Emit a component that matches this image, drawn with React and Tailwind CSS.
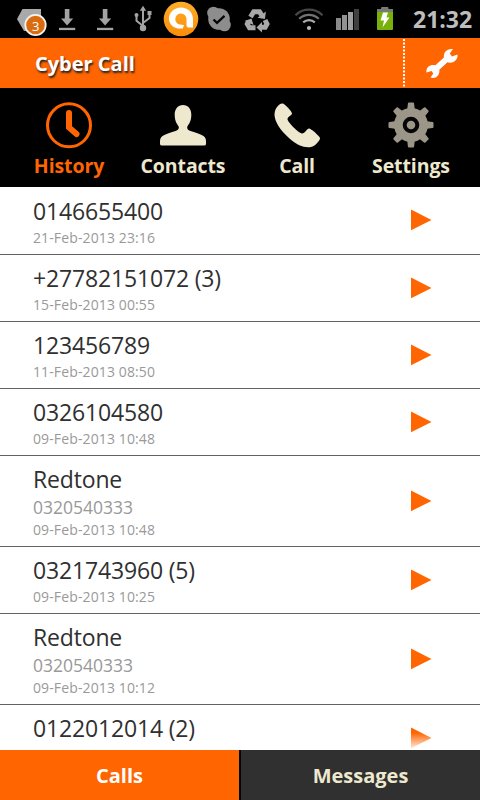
import React from "react";

const calls = [
  { title: "0146655400", date: "21-Feb-2013 23:16" },
  { title: "+27782151072 (3)", date: "15-Feb-2013 00:55" },
  { title: "123456789", date: "11-Feb-2013 08:50" },
  { title: "0326104580", date: "09-Feb-2013 10:48" },
  { title: "Redtone", number: "0320540333", date: "09-Feb-2013 10:48" },
  { title: "0321743960 (5)", date: "09-Feb-2013 10:25" },
  { title: "Redtone", number: "0320540333", date: "09-Feb-2013 10:12" },
  { title: "0122012014 (2)" },
];

function Download() {
  return (
    <svg width="38" height="38" viewBox="48 0 38 38" fill="#a3a3a3" className="shrink-0">
      <path d="M64.8 9h4.6v9.5h3.8L67.1 25.5 61 18.500h3.800z" />
      <rect x="59" y="27.800" width="16.200" height="2.300" />
    </svg>
  );
}

function StatusBar() {
  return (
    <header className="flex h-[38px] shrink-0 bg-black">
      <svg width="48" height="38" viewBox="0 0 48 38" className="shrink-0">
        <path d="M22.500 9H41v16L34 31H24L17 19z" fill="#a9a9a9" />
        <circle cx="35.500" cy="25" r="10.200" fill="#d96b10" stroke="#f7f3ee" strokeWidth="1.800" />
        <text x="35.600" y="30.600" textAnchor="middle" fontSize="13" fill="#fff" fontFamily="Open Sans, sans-serif">3</text>
      </svg>
      <Download />
      <Download />
      <svg width="36" height="38" viewBox="124 0 36 38" fill="none" stroke="#a3a3a3" strokeWidth="2" className="shrink-0">
        <path d="M143 28V9M143 26l-6.500-5.200V15M143 23l6.500-5V14" />
        <path d="M143 5.800l3.200 5h-6.400z" fill="#a3a3a3" stroke="none" />
        <circle cx="136.500" cy="15" r="2" fill="#a3a3a3" stroke="none" />
        <rect x="147.500" y="11" width="4" height="4" fill="#a3a3a3" stroke="none" />
        <circle cx="143" cy="28" r="3.200" fill="#a3a3a3" stroke="none" />
      </svg>
      <svg width="42" height="38" viewBox="160 0 42 38" fill="none" className="shrink-0">
        <defs>
          <linearGradient id="amber" x1="0" y1="0" x2="0" y2="1">
            <stop offset="0" stopColor="#ffae28" />
            <stop offset="1" stopColor="#fa8d0c" />
          </linearGradient>
        </defs>
        <circle cx="181" cy="19" r="17.300" fill="url(#amber)" />
        <path d="M193 27.500h-4.500c-1.500 0-2-1-2-2.500v-6a5.600 5.600 0 1 0-6.500 5.600l4 .400-1.200 3.600h-2.800C173.500 28.600 169 24.500 169 18.500 169 12.500 174 7.500 181 7.500s12 5 12 11.500z" fill="#fff" />
      </svg>
      <svg width="36" height="38" viewBox="202 0 36 38" className="shrink-0">
        <g fill="#8d8d8d">
          <circle cx="219" cy="19" r="10.800" />
          <circle cx="213.500" cy="13" r="6.300" />
          <circle cx="224.500" cy="25" r="6.300" />
        </g>
        <path d="M213.500 19.500l3.500 3.300 7.500-7" stroke="#050505" strokeWidth="2.300" fill="none" />
      </svg>
      <svg width="52" height="38" viewBox="238 0 52 38" fill="none" stroke="#a8a8a8" strokeWidth="5" className="shrink-0">
        <path d="M250.500 17l3.200-5.200h5.800l2.200 3.400" />
        <path d="M257.500 17.800l7.400 1.200 1-7.500z" fill="#a8a8a8" stroke="none" />
        <path d="M265 20l2 4-1.800 3.300h-4" />
        <path d="M262 22v10.500l-5.500-5z" fill="#a8a8a8" stroke="none" />
        <path d="M255.500 27.700h-6L247.300 24l1.500-2.800" />
        <path d="M244.500 21l7-2.500 2 6.500z" fill="#a8a8a8" stroke="none" />
      </svg>
      <svg width="38" height="38" viewBox="290 0 38 38" fill="none" strokeWidth="2.200" className="shrink-0">
        <path d="M295.500 15.200a19 19 0 0 1 27 0" stroke="#484848" />
        <path d="M299.200 18.800a14 14 0 0 1 19.600 0" stroke="#737373" />
        <path d="M303.200 22.400a8.500 8.500 0 0 1 11.600 0" stroke="#aaa" />
        <circle cx="309" cy="28" r="2.100" fill="#bbb" />
      </svg>
      <svg width="40" height="38" viewBox="328 0 40 38" className="shrink-0">
        <rect x="336" y="18" width="5" height="12" fill="#8a8a8a" />
        <rect x="342" y="15" width="5" height="15" fill="#929292" />
        <rect x="348" y="12" width="5" height="18" fill="#a0a0a0" />
        <rect x="354" y="9" width="5" height="21" fill="#404040" />
      </svg>
      <svg width="45" height="38" viewBox="368 0 45 38" className="shrink-0">
        <rect x="381" y="7" width="7.500" height="4" rx="1" fill="#777b70" />
        <rect x="377" y="9" width="16" height="21" rx="1" fill="#78b00c" />
        <rect x="377" y="9" width="16" height="3" rx="1" fill="#777b70" />
        <path d="M383 12.500h5l-1.500 5h3l-7 10 1.500-7h-3.500z" fill="#fff" />
      </svg>
      <span className="whitespace-nowrap text-[23px] font-bold leading-[38px] text-[#bdbdbd]">21:32</span>
    </header>
  );
}

function Tab({ label, className, children }) {
  return (
    <div className={"flex w-[114px] shrink-0 flex-col items-center " + className}>
      <svg width="48" height="48" viewBox="0 0 48 48">{children}</svg>
      <span className="mt-1 whitespace-nowrap text-[19.500px] font-bold leading-[26px] tracking-[-0.1px]">{label}</span>
    </div>
  );
}

function Gear() {
  const angles = [0, 45, 90, 135, 180, 225, 270, 315];
  return (
    <g fill="#9b9688">
      {angles.map((a) => (
        <path key={a} d="M20.300 8l.6-5.500q.1-1 1-1h4.200q.9 0 1 1l.6 5.500z" transform={`rotate(${a} 24 24)`} />
      ))}
      <circle cx="24" cy="24" r="17" />
      <circle cx="24" cy="24" r="6.300" fill="none" stroke="#050505" strokeWidth="4" />
    </g>
  );
}

function CallRow({ title, number, date, className, last }) {
  return (
    <li className={"flex shrink-0 items-center pl-[33px] pr-[48px] " + className}>
      <div className={"flex flex-1 flex-col whitespace-nowrap " + (last ? "self-start pt-[8px]" : "pt-[3px]")}>
        <span className="text-[23px] leading-[31px] tracking-[-0.16px] text-[#303030]">{title}</span>
        {number && <span className="text-[17.500px] leading-6 text-[#999]">{number}</span>}
        {date && <span className="text-[14px] leading-[22px] tracking-[0.12px] text-[#999]">{date}</span>}
      </div>
      <svg width="22" height="22" viewBox="0 0 22 22" className="mb-[1px]">
        <defs>
          <linearGradient id="fade" x1="0" y1="0" x2="0" y2="1">
            <stop offset="0" stopColor="#ff6500" />
            <stop offset="0.250" stopColor="#ff6500" />
            <stop offset="1" stopColor="#ffe8da" />
          </linearGradient>
        </defs>
        <path d="M1 .6L21.500 10.900 1 21.200z" fill={last ? "url(#fade)" : "#ff6500"} />
      </svg>
    </li>
  );
}

function rowClass(call, index) {
  if (index === 0) return "h-[68px] border-b border-[#626262]";
  if (index === calls.length - 1) return "h-[66px]";
  return call.number ? "h-[91px] border-b border-[#626262]" : "h-[67px] border-b border-[#626262]";
}

export default function App() {
  return (
    <div className="flex h-[800px] w-[480px] flex-col overflow-hidden bg-white font-['Open_Sans','Noto_Sans',sans-serif]">
      <StatusBar />
      <div className="flex h-[50px] shrink-0 items-center bg-[#ff6500] text-white">
        <h1 className="flex-1 pl-[35px] pt-px text-[20px] font-bold leading-[49px] [text-shadow:1px_2px_2px_#222]">Cyber Call</h1>
        <svg width="78" height="50" viewBox="402 38 78 50">
          <path d="M404 39v49" stroke="#fff" strokeWidth="2" strokeDasharray="2 1.500" />
          <g stroke="#fff" fill="#fff">
            <path d="M434 70.500L449 57" stroke="#a64200" strokeWidth="5.500" transform="translate(-1 1.500)" />
            <path d="M434 70.500L449 57" strokeWidth="6" />
            <path d="M445 52c2-2.500 5-3.500 8-3l-3.200 4.500 2.200 3 5.500-2c.5 3-1 6-4 7.500-4 2-8.500 0-9.500-4-.4-2 0-4 1-6z" stroke="none" />
            <path d="M438 75.500c-2 2.500-5 3-7.500 2l2.800-4-1.800-2.500-5 1.500c-.5-3 1-6 4-7 4-1.500 8 .500 8.800 4 .4 2 0 4-1.300 6z" stroke="none" />
          </g>
        </svg>
      </div>
      <nav className="flex h-[99px] shrink-0 justify-center bg-black pt-[13px] text-[#eee8cf]">
        <Tab label="History" className="text-[#ff6500]">
          <circle cx="24" cy="24.300" r="21.500" fill="none" stroke="#ff6500" strokeWidth="3" />
          <path d="M24 12v14.500l7.500 6.500" fill="none" stroke="#ff6500" strokeWidth="6" strokeLinecap="round" />
        </Tab>
        <Tab label="Contacts" className="">
          <path d="M24 4c5 0 8.500 4 8.300 10-.1 6-2 8.500-4 11.500-.5 2 .5 3.500 3.200 4.500 9 3 15.500 4 15.500 10v3q0 1.500-2 1.500H3q-2 0-2-1.500v-3c0-6 6.500-7 15.500-10 2.700-1 3.700-2.500 3.200-4.500-2-3-3.900-5.500-4-11.500C15.500 8 19 4 24 4z" fill="#eee8cf" />
        </Tab>
        <Tab label="Call" className="">
          <path d="M3 7.500C5 4 8 2 10 2.500c1.500.5 9 7.800 9 10 0 1.500-4 3-4.500 5.500 0 3 11 14 14.500 14.500 3 0 5-5 7-5 2 0 10 7 11 9.500.500 2-5 8.500-9 9-7 .800-13-1-21.500-8.500C7 29 2 21 1.500 14c0-2.500.5-4.500 1.500-6.500z" fill="#eee8cf" />
        </Tab>
        <Tab label="Settings" className="">
          <Gear />
        </Tab>
      </nav>
      <ul className="flex min-h-0 flex-1 flex-col overflow-hidden">
        {calls.map((call, i) => (
          <CallRow key={i} {...call} className={rowClass(call, i)} last={i === calls.length - 1} />
        ))}
      </ul>
      <footer className="flex h-[50px] shrink-0 bg-black text-center text-[20px] font-bold leading-[51px]">
        <div className="w-[239px] bg-[#ff6500] text-white">Calls</div>
        <div className="ml-[2px] flex-1 bg-[#303030] text-[#eee8cf]">Messages</div>
      </footer>
    </div>
  );
}
